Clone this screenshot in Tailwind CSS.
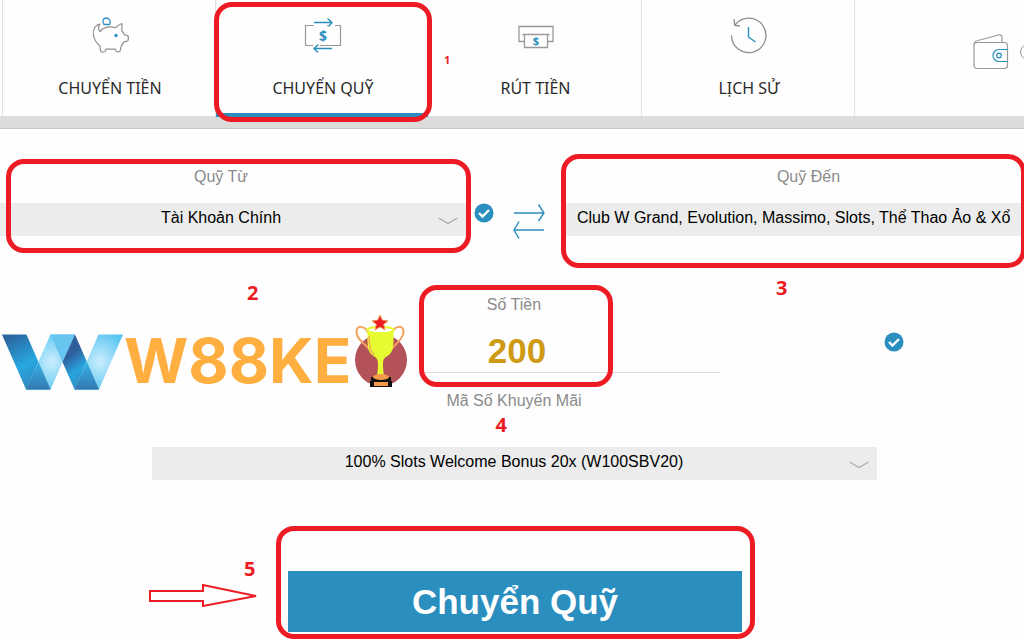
<!DOCTYPE html>
<html lang="vi">
<head>
<meta charset="utf-8">
<meta name="viewport" content="width=device-width, initial-scale=1">
<title>Chuyển Quỹ</title>
<script src="https://cdn.jsdelivr.net/npm/@tailwindcss/browser@4"></script>
</head>
<body class="min-h-screen overflow-x-hidden bg-[#fefefe] font-['Liberation_Sans',Arial,sans-serif] text-base text-[#1c1c1c]">
<svg class="hidden" aria-hidden="true">
  <symbol id="check" viewBox="0 0 20 20"><circle cx="10" cy="10" r="9.5" fill="#2a8ebf"/><path d="M5 10l3.500 3.500L15 7" fill="none" stroke="#fff" stroke-width="2.400"/></symbol>
  <symbol id="chevron" viewBox="0 0 20 8"><path d="M.5 1L10 6.500 19.500 1" fill="none" stroke="#aaa" stroke-width="1.200"/></symbol>
</svg>

<header>
  <nav class="ml-0.5 flex font-['Noto_Sans',sans-serif] leading-6 text-[#2b2b2b]">
    <a href="#deposit" class="flex w-[213px] shrink-0 flex-col items-center gap-5 border-l border-[#e2e2e2] py-4 pl-0.5">
      <svg class="h-10 w-10" viewBox="0 0 40 40" fill="none" stroke="#8f8f8f" stroke-width="1.200" stroke-linejoin="round">
        <path d="M10 8C5 9 2.500 14 3.500 19.500c.6 3.800 3 7.500 6.500 10.500.8 1-.8 3.500 1 5.500 1 .8 3.500.8 4.200-.3.500-1 .3-1.800.800-2h9c.800.200.500 1.500 1.300 2.200 1 .8 3 .6 3.700-.4.700-1 .5-3 1-4 .8-2 2-4 3-5 1.300-.800 3.500-.500 4-1.500.4-1 .4-3 .2-4.500-.7-.8-2.700-.5-3.400-1.200-1-1-1.500-2.500-2.800-3.500-.8-2 .3-6 0-7.800-2.500.5-4.500 2.500-6.500 4.200-5-1.500-12-1.200-15.500 4C8 13.500 8 10 10 8z"/>
        <path d="M14 8.500C11.500 5 13.500 2 16 2s5.500 3 3.700 6.500z" stroke="#2a8ebf" stroke-width="1.300"/>
        <circle cx="26" cy="19.500" r="1.700" fill="#2a8ebf" stroke="none"/>
      </svg>
      <span>CHUYỂN TIỀN</span>
    </a>
    <a href="#transfer" aria-current="page" class="relative flex w-[213px] shrink-0 flex-col items-center gap-5 border-l border-[#e2e2e2] py-4 pl-0.5">
      <svg class="h-10 w-10" viewBox="0 0 40 40" fill="none">
        <path d="M11 9.500H2.500v20H10m14-20h1m7 0h5.500v20H17" stroke="#999" stroke-width="1.200"/>
        <path d="M11 6.500h18m-4.500-4l4.500 4-3.500 4M29 32.500H11m4.500-4l-4.500 4 4 4" stroke="#2a8ebf" stroke-width="1.400"/>
        <text x="20" y="25" text-anchor="middle" fill="#2a8ebf" font-size="14" font-weight="700">$</text>
      </svg>
      <span>CHUYỂN QUỸ</span>
      <span class="absolute inset-x-0 -bottom-px h-1 bg-[#2a8ebf]"></span>
      <span class="absolute top-0.5 -right-1 -bottom-1.5 -left-0.5 z-10 rounded-[18px] border-5 border-[#ed1c24]"></span>
    </a>
    <a href="#withdraw" class="relative flex w-[213px] shrink-0 flex-col items-center gap-5 py-4 pl-0.5">
      <span class="absolute top-12 left-4 text-[11px] leading-6 font-bold text-[#ed1c24]">1</span>
      <svg class="h-10 w-10" viewBox="0 0 40 40" fill="none">
        <path d="M8 25.500H3v-15h34v15h-5M6.500 18.500h27M8.500 18.500v13h23v-13" stroke="#999" stroke-width="1.300"/>
        <text x="20" y="29" text-anchor="middle" fill="#2a8ebf" font-size="11" font-weight="700">$</text>
      </svg>
      <span>RÚT TIỀN</span>
    </a>
    <a href="#history" class="flex w-[214px] shrink-0 flex-col items-center gap-5 border-x border-[#e2e2e2] py-4 pl-0.5">
      <svg class="h-10 w-10" viewBox="0 0 40 40" fill="none">
        <path d="M2.500 19.500a17.200 17.200 0 1 0 3.500-10.500" stroke="#8f8f8f" stroke-width="1.300"/>
        <path d="M5 3l.800 6.500 5.200.500" stroke="#8f8f8f" stroke-width="1.300"/>
        <path d="M19.500 11v10l7 5" stroke="#2a8ebf" stroke-width="1.400"/>
      </svg>
      <span>LỊCH SỬ</span>
    </a>
    <div class="flex min-w-0 flex-1 items-start gap-[11px] overflow-hidden pt-[34px] pl-[118px]">
      <svg class="h-9 w-9 shrink-0" viewBox="0 0 36 36" fill="none" stroke="#9a9a9a" stroke-width="1.200">
        <rect x="1" y="8.500" width="33.500" height="26" rx="3"/>
        <path d="M1 11c0-3 1.500-4 4-4.500L25.500 1c2-.5 3.500.5 3.500 2.500v5"/>
        <path d="M34.500 15.500H26a6 6 0 0 0 0 12h8.500" stroke="#2a8ebf"/><circle cx="26" cy="21.500" r="2.300" stroke="#2a8ebf"/>
      </svg>
      <svg class="mt-2.5 h-4 w-4 shrink-0" viewBox="0 0 16 16" fill="none" stroke="#999"><circle cx="8" cy="8" r="7.500"/></svg>
    </div>
  </nav>
  <div class="h-[13px] border-b border-[#c8c8c8] bg-[#dcdcdc]"></div>
</header>

<main class="pb-2 leading-6">
  <section class="grid grid-cols-[minmax(0,466fr)_99px_minmax(0,459fr)] items-start pt-9">
    <div class="relative flex flex-col gap-3.5">
      <label for="from" class="pr-6 text-center text-[#8a8a8a]">Quỹ Từ</label>
      <div class="relative">
        <select id="from" class="block h-[33px] w-full appearance-none bg-[#ececec] pr-6 pb-1 text-center text-black"><option>Tài Khoản Chính</option></select>
        <svg class="pointer-events-none absolute top-3.5 right-2 h-2 w-5"><use href="#chevron"/></svg>
      </div>
      <span class="pointer-events-none absolute -top-1.5 -right-[5px] -bottom-[17px] left-1.5 rounded-[18px] border-5 border-[#ed1c24]"></span>
      <span class="absolute top-29 left-[247px] font-['Noto_Sans',sans-serif] text-xl leading-6 font-bold text-[#ed1c24]">2</span>
    </div>
    <div class="flex h-[71px] items-start gap-[19px] pt-[38px] pl-2">
      <svg class="h-5 w-5 shrink-0"><use href="#check"/></svg>
      <svg class="h-9 w-8 shrink-0" viewBox="0 0 32 36" fill="none" stroke="#2a8ebf" stroke-width="1.400"><path d="M1 10h30M25.500 1.500l5.500 8.500-5.500 8M31 27H1M6 18.500L1 27l5 8.500"/></svg>
    </div>
    <div class="relative flex flex-col gap-3.5">
      <label for="to" class="pl-7 text-center text-[#8a8a8a]">Quỹ Đến</label>
      <select id="to" class="block h-[33px] w-full appearance-none bg-[#ececec] pb-1 pl-3 text-left text-black"><option>Club W Grand, Evolution, Massimo, Slots, Thể Thao Ảo &amp; Xổ</option></select>
      <span class="pointer-events-none absolute -top-[11px] -right-0.5 -bottom-8 -left-1 rounded-[18px] border-5 border-[#ed1c24]"></span>
      <span class="absolute top-[111px] left-[211px] font-['Noto_Sans',sans-serif] text-xl leading-6 font-bold text-[#ed1c24]">3</span>
    </div>
  </section>

  <section class="relative mt-[57px] grid grid-cols-[1fr_412px_1fr] pl-1">
    <div class="relative col-start-2 flex flex-col gap-3">
      <label for="amount" class="text-center text-[#8a8a8a]">Số Tiền</label>
      <input id="amount" type="text" value="200" class="h-11 w-full border-b border-[#dedede] bg-transparent pl-1.5 text-center text-[35px] font-bold text-[#cf9a15]">
      <span class="pointer-events-none absolute -top-2 right-[107px] -bottom-3.5 left-[111px] z-10 rounded-[18px] border-5 border-[#ed1c24]"></span>
    </div>
    <svg class="mt-[39px] ml-[164px] h-5 w-5"><use href="#check"/></svg>
    <div class="absolute top-5 left-0 flex h-20 w-[418px] items-start bg-[#fefefe]">
      <svg class="mt-[21px] ml-0.5 h-14 w-[122px] shrink-0" viewBox="0 0 122 56" role="img" aria-label="W88">
        <defs>
          <linearGradient id="g1" x1=".2" y1="0" x2=".7" y2="1"><stop offset="0" stop-color="#2b649f"/><stop offset=".55" stop-color="#27a8df"/><stop offset="1" stop-color="#3480b8"/></linearGradient>
          <linearGradient id="g2" x1=".2" y1="0" x2=".7" y2="1"><stop offset="0" stop-color="#2d5f9b"/><stop offset=".3" stop-color="#305f9d"/><stop offset=".6" stop-color="#28a5dd"/><stop offset="1" stop-color="#347eb6"/></linearGradient>
          <radialGradient id="g3" cx=".52" cy=".5" r=".6"><stop offset="0" stop-color="#cceefd"/><stop offset="1" stop-color="#56c4f1"/></radialGradient>
          <linearGradient id="g4" x1="0" y1="0" x2="0" y2="1"><stop offset="0" stop-color="#36b1e4"/><stop offset="1" stop-color="#3479b0"/></linearGradient>
        </defs>
        <path d="M0 .5h24.500l24 55H24z" fill="url(#g1)"/>
        <path d="M48.500.5H73l-24.500 55H24z" fill="url(#g3)"/>
        <path d="M36.500 28L48.500 55.500H24z" fill="url(#g4)"/>
        <path d="M48.500.5H73L60.500 28z" fill="#68c5ef"/>
        <path d="M73 .5l24 55H72.500L60.500 28z" fill="url(#g2)"/>
        <path d="M96.500.5H121l-24 55H72.500z" fill="url(#g3)"/>
        <path d="M85 28l12 27.500H72.500z" fill="url(#g4)"/>
      </svg>
      <span class="mt-3 font-[Inter,sans-serif] text-[62px] leading-[72px] font-bold text-[#ffae40]">W88KE</span>
      <svg class="absolute top-0 left-[354px] h-[76px] w-14" viewBox="0 0 56 76" aria-hidden="true">
        <circle cx="27" cy="47" r="26" fill="#b45259"/>
        <g fill="none" stroke="#f2a35e" stroke-width="2"><path d="M14 20C11 12 2 12 2.500 19c.5 9 10 12 14 19"/><path d="M38 20c3-8 12-8 11.500-1-.5 9-10 12-13 19"/></g>
        <path d="M13.500 17c0 12-1 22 6 26 4 2 4.500 4 4.500 9 0 4-.5 7-1 12h7c-.5-5-1-8-1-12 0-5 .500-7 4.500-9 7-4 6-14 6-26z" fill="#e6fb32"/>
        <ellipse cx="26.500" cy="17" rx="13" ry="3" fill="#fff" stroke="#e6fb32" stroke-width="2"/>
        <path d="M15 23c0 9 1 15 5 19" fill="none" stroke="#f2a35e" stroke-width="1.300"/>
        <path d="M26 2l2.300 5 5.700.700-4.300 3.800 1.300 5.500-5-3-5 3 1.300-5.500L18 7.700l5.700-.7z" fill="#ed1c24" stroke="#f2a35e"/>
        <path d="M17 64h20v4h1v6H16v-6h1z" fill="#111"/><ellipse cx="27" cy="64" rx="8" ry="3" fill="#f29a4a"/><path d="M20 69h14v4H20z" fill="#f29a4a"/>
      </svg>
    </div>
  </section>

  <section class="relative mt-4 flex flex-col items-center gap-[34px] pl-1">
    <label for="promo" class="text-center text-[#8a8a8a]">Mã Số Khuyến Mãi</label>
    <div class="relative w-[725px]">
      <select id="promo" class="block h-[33px] w-full appearance-none bg-[#ececec] pb-1 text-center text-black"><option>100% Slots Welcome Bonus 20x (W100SBV20)</option></select>
      <svg class="pointer-events-none absolute top-3.5 right-2 h-2 w-5"><use href="#chevron"/></svg>
      <span class="absolute -top-[34px] left-[344px] font-['Noto_Sans',sans-serif] text-xl leading-6 font-bold text-[#ed1c24]">4</span>
    </div>
  </section>

  <div class="mt-[91px] flex justify-center pl-1.5">
    <div class="relative w-[454px]">
      <button type="button" class="block h-[61px] w-full bg-[#2a8ebf] text-[35px] font-bold text-white">Chuyển Quỹ</button>
      <span class="pointer-events-none absolute -top-[45px] -right-[13px] -bottom-[7px] -left-3 rounded-[18px] border-5 border-[#ed1c24]"></span>
      <span class="absolute -top-3.5 -left-11 font-['Noto_Sans',sans-serif] text-xl leading-6 font-bold text-[#ed1c24]">5</span>
      <svg class="absolute top-3 -left-[140px] h-6 w-[110px]" viewBox="0 0 110 24" fill="none" stroke="#ed1c24" stroke-width="2"><path d="M2 8h53V2l53 11-53 10v-5H2z"/></svg>
    </div>
  </div>
</main>
</body>
</html>
